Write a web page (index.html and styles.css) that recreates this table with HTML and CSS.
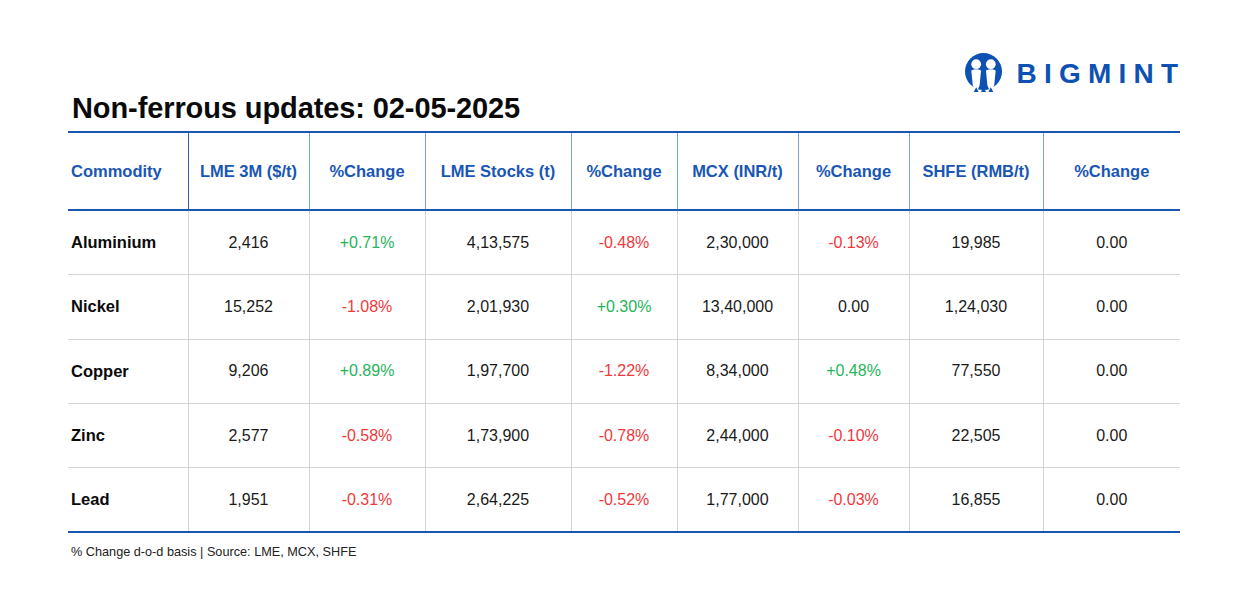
FILE: index.html
```html
<!DOCTYPE html>
<html>
<head>
<meta charset="utf-8">
<link rel="stylesheet" href="styles.css">
</head>
<body>
<div class="page">
  <div class="brand">
    <svg class="brand-mark" viewBox="0 0 40 40" width="39" height="39" aria-hidden="true">
      <circle cx="20" cy="19" r="19" fill="#0d51b3"/>
      <circle cx="12.5" cy="11.5" r="5" fill="#fff"/>
      <circle cx="27.5" cy="11.5" r="5" fill="#fff"/>
      <path d="M7.5 18 Q12.5 15.5 17.5 18 L16 33 L14 38 L11 38 L9 33 Z" fill="#fff"/>
      <path d="M22.5 18 Q27.5 15.5 32.5 18 L31 33 L29 38 L26 38 L24 33 Z" fill="#fff"/>
      <path d="M10 40 L12.5 35 L15 40 Z M17.5 40 L20 34 L22.5 40 Z M25 40 L27.5 35 L30 40 Z" fill="#0d51b3"/>
    </svg>
    <span class="brand-name">BIGMINT</span>
  </div>
  <h1 class="title">Non-ferrous updates: 02-05-2025</h1>
  <table class="grid">
    <colgroup>
      <col style="width:120px"><col style="width:121px"><col style="width:116px"><col style="width:146px"><col style="width:106px"><col style="width:121px"><col style="width:111px"><col style="width:134px"><col style="width:137px">
    </colgroup>
    <thead>
      <tr>
        <th class="first">Commodity</th>
        <th>LME 3M ($/t)</th>
        <th>%Change</th>
        <th>LME Stocks (t)</th>
        <th>%Change</th>
        <th>MCX (INR/t)</th>
        <th>%Change</th>
        <th>SHFE (RMB/t)</th>
        <th>%Change</th>
      </tr>
    </thead>
    <tbody>
      <tr>
        <td class="first">Aluminium</td><td>2,416</td><td class="up">+0.71%</td><td>4,13,575</td><td class="down">-0.48%</td><td>2,30,000</td><td class="down">-0.13%</td><td>19,985</td><td>0.00</td>
      </tr>
      <tr>
        <td class="first">Nickel</td><td>15,252</td><td class="down">-1.08%</td><td>2,01,930</td><td class="up">+0.30%</td><td>13,40,000</td><td>0.00</td><td>1,24,030</td><td>0.00</td>
      </tr>
      <tr>
        <td class="first">Copper</td><td>9,206</td><td class="up">+0.89%</td><td>1,97,700</td><td class="down">-1.22%</td><td>8,34,000</td><td class="up">+0.48%</td><td>77,550</td><td>0.00</td>
      </tr>
      <tr>
        <td class="first">Zinc</td><td>2,577</td><td class="down">-0.58%</td><td>1,73,900</td><td class="down">-0.78%</td><td>2,44,000</td><td class="down">-0.10%</td><td>22,505</td><td>0.00</td>
      </tr>
      <tr>
        <td class="first">Lead</td><td>1,951</td><td class="down">-0.31%</td><td>2,64,225</td><td class="down">-0.52%</td><td>1,77,000</td><td class="down">-0.03%</td><td>16,855</td><td>0.00</td>
      </tr>
    </tbody>
  </table>
  <p class="note">% Change d-o-d basis | Source: LME, MCX, SHFE</p>
</div>
</body>
</html>
```
FILE: styles.css
```css
html, body {
  margin: 0;
  padding: 0;
  background: #ffffff;
}
body {
  font-family: "Liberation Sans", Arial, sans-serif;
  color: #111111;
}
.page {
  width: 1112px;
  margin-left: 68px;
  padding-top: 52px;
}
.brand {
  display: flex;
  justify-content: flex-end;
  align-items: center;
  gap: 14px;
  height: 40px;
  padding-right: 2px;
}
.brand-mark {
  display: block;
}
.brand-name {
  font-size: 28px;
  font-weight: 700;
  letter-spacing: 7.2px;
  margin-right: -7.2px;
  color: #0d51b3;
  line-height: 1;
  padding-top: 3px;
}
.title {
  margin: 0;
  padding-left: 4px;
  font-size: 29px;
  font-weight: 700;
  color: #0a0a0a;
  line-height: 32px;
  height: 39px;
  letter-spacing: -0.1px;
}
.grid {
  width: 1112px;
  border-collapse: collapse;
  table-layout: fixed;
  border-top: 2px solid #1a58b0;
  border-bottom: 2px solid #1a58b0;
}
.grid th {
  height: 76px;
  padding: 0;
  font-size: 16.5px;
  font-weight: 700;
  color: #1a56b5;
  text-align: center;
  border-bottom: 2px solid #1a58b0;
  border-left: 1px solid #7aa0d4;
}
.grid th:nth-child(2) {
  border-left-color: #2a5fb0;
}
.grid td {
  height: 63.3px;
  padding: 0;
  font-size: 16px;
  text-align: center;
  color: #1a1a1a;
  border-left: 1px solid #d4d4d4;
  border-top: 1px solid #d4d4d4;
}
.grid tbody tr:first-child td {
  border-top: none;
}
.grid .first {
  text-align: left;
  padding-left: 3px;
  border-left: none;
}
.grid td.first {
  font-weight: 700;
  font-size: 16.5px;
  color: #0a0a0a;
}
.grid td.up {
  color: #27b35b;
}
.grid td.down {
  color: #f2383d;
}
.note {
  margin: 12px 0 0 3px;
  font-size: 12.7px;
  color: #222222;
}
```
